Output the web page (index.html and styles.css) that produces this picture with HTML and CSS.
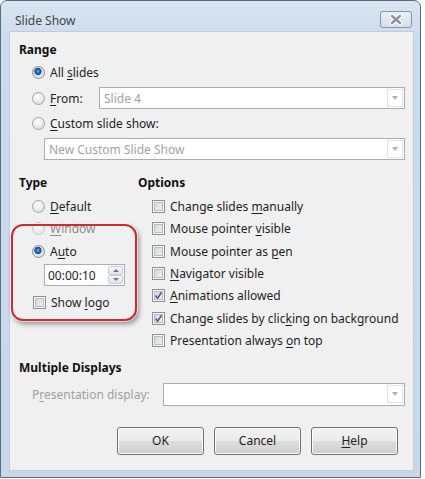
FILE: index.html
```html
<!DOCTYPE html>
<html lang="en">
<head>
    <meta charset="UTF-8">
    <title>Slide Show</title>
    <link rel="stylesheet" href="styles.css">
</head>
<body>
    <div class="window">
        <div class="titlebar">
            <span class="title">Slide Show</span>
            <span class="close">
                <svg width="14" height="11" viewBox="0 0 14 11">
                    <path d="M3 2 L11 9 M11 2 L3 9" stroke="#ffffff" stroke-width="4.6" stroke-linecap="round"/>
                    <path d="M3 2 L11 9 M11 2 L3 9" stroke="#8b939e" stroke-width="2.4" stroke-linecap="round"/>
                </svg>
            </span>
        </div>
        <div class="client">
            <h2>Range</h2>
            <div class="range">
                <div class="row first"><span class="radio on"></span><span class="lbl">All <u>s</u>lides</span></div>
                <div class="row"><span class="radio"></span><span class="lbl from"><u>F</u>rom:</span>
                    <div class="combo">Slide 4<span class="arrow"><i></i></span></div>
                </div>
                <div class="row"><span class="radio"></span><span class="lbl"><u>C</u>ustom slide show:</span></div>
                <div class="combo custom">New Custom Slide Show<span class="arrow"><i></i></span></div>
            </div>

            <div class="columns">
                <div class="type">
                    <h2>Type</h2>
                    <div class="list">
                        <div class="row"><span class="radio"></span><span class="lbl"><u>D</u>efault</span></div>
                        <div class="row"><span class="radio faded"></span><span class="lbl faded"><u>W</u>indow</span></div>
                        <div class="row"><span class="radio on"></span><span class="lbl">A<u>u</u>to</span></div>
                        <div class="spin">
                            <span class="value">00:00:10</span>
                            <span class="spinner"><b class="up"></b><b class="down"></b></span>
                        </div>
                        <div class="row logo"><span class="check"></span><span class="lbl">Show <u>l</u>ogo</span></div>
                    </div>
                    <div class="highlight"></div>
                </div>
                <div class="options">
                    <h2>Options</h2>
                    <div class="list">
                        <div class="row"><span class="check"></span><span class="lbl">Change slides <u>m</u>anually</span></div>
                        <div class="row"><span class="check"></span><span class="lbl">Mouse pointer <u>v</u>isible</span></div>
                        <div class="row"><span class="check"></span><span class="lbl">Mouse pointer as <u>p</u>en</span></div>
                        <div class="row"><span class="check"></span><span class="lbl"><u>N</u>avigator visible</span></div>
                        <div class="row"><span class="check on"><svg width="11" height="11" viewBox="0 0 11 11"><path d="M2.5 5.5 L4.6 8.2 L8.6 2.2" fill="none" stroke="#4a5e94" stroke-width="1.6"/></svg></span><span class="lbl"><u>A</u>nimations allowed</span></div>
                        <div class="row"><span class="check on"><svg width="11" height="11" viewBox="0 0 11 11"><path d="M2.5 5.5 L4.6 8.2 L8.6 2.2" fill="none" stroke="#4a5e94" stroke-width="1.6"/></svg></span><span class="lbl">Change slides by clic<u>k</u>ing on background</span></div>
                        <div class="row"><span class="check"></span><span class="lbl">Presentation always <u>o</u>n top</span></div>
                    </div>
                </div>
            </div>

            <h2 class="displays-head">Multiple Displays</h2>
            <div class="display-row">
                <span class="lbl disabled">P<u>r</u>esentation display:</span>
                <div class="combo"><span class="arrow"><i></i></span></div>
            </div>

            <div class="buttons">
                <button>OK</button>
                <button>Cancel</button>
                <button><u>H</u>elp</button>
            </div>
        </div>
    </div>
</body>
</html>
```

FILE: styles.css
```css
body {
    margin: 0;
    background: #ffffff;
    font-family: "Noto Sans", "Open Sans", sans-serif;
    font-size: 12px;
    color: #1e1e1e;
}
.window {
    width: 421px;
    height: 478px;
    box-sizing: border-box;
    border: 1px solid #5c6b7d;
    border-radius: 7px 7px 0 0;
    background: linear-gradient(#dae5f2, #cbdaec 40px, #c8d8ea);
    padding: 0 7px 7px 9px;
}
.titlebar {
    height: 31px;
    display: flex;
    align-items: flex-start;
    padding-left: 5px;
}
.title {
    color: #454545;
    font-size: 12px;
    flex: 1;
    margin-top: 11px;
}
.close {
    width: 32px;
    height: 17px;
    box-sizing: border-box;
    border: 1px solid #8795a6;
    border-radius: 3px;
    background: linear-gradient(#e9eff6, #d5dfea);
    display: flex;
    align-items: center;
    justify-content: center;
    margin-right: 1px;
    margin-top: 10px;
}
.client {
    height: 438px;
    box-sizing: border-box;
    background: #f0f0f0;
    box-shadow: 0 0 0 1px #bfcde0;
    padding: 10px 8px 0 9px;
}
h2 {
    margin: 0;
    height: 16px;
    line-height: 16px;
    font-size: 12px;
    font-weight: bold;
    color: #111;
}
.row {
    display: flex;
    align-items: center;
    height: 22px;
}
.lbl {
    white-space: nowrap;
}
u {
    text-decoration-thickness: 1px;
    text-underline-offset: 2px;
}
.range {
    padding-left: 13px;
}
.range .row {
    margin-top: 3px;
}
.range .row.first {
    margin-top: 2px;
    height: 24px;
}
.range .lbl {
    margin-left: 5px;
}
.range .from {
    width: 49px;
}
.range .combo {
    flex: 1;
}
.combo {
    height: 22px;
    box-sizing: border-box;
    border: 1px solid #acacac;
    background: #ffffff;
    display: flex;
    align-items: center;
    padding-left: 4px;
    color: #a3a3a3;
}
.combo.custom {
    margin: 4px 0 0 12px;
}
.arrow {
    margin-left: auto;
    width: 16px;
    height: 18px;
    box-sizing: border-box;
    border: 1px solid #e3e3e3;
    margin-right: 1px;
    display: flex;
    align-items: center;
    justify-content: center;
}
.arrow i {
    width: 0;
    height: 0;
    border-left: 3.5px solid transparent;
    border-right: 3.5px solid transparent;
    border-top: 4px solid #b3b3b3;
}
.radio {
    width: 13px;
    height: 13px;
    box-sizing: border-box;
    border-radius: 50%;
    border: 1px solid #a2a4a6;
    background: radial-gradient(circle at 40% 35%, #ffffff, #e2e2e2 70%, #d6d6d6);
    flex: none;
}
.radio.on {
    border-color: #8a8c8e;
    background: radial-gradient(circle at 45% 40%, #8cc4f0 0, #2a6fb8 1.6px, #184d8f 3.3px, #d8dde4 3.9px, #f4f4f4 100%);
}
.radio.faded {
    opacity: 0.55;
}
.check {
    width: 13px;
    height: 13px;
    box-sizing: border-box;
    border: 1px solid #8e8f8f;
    background: linear-gradient(135deg, #cfd3d8, #f4f4f4);
    box-shadow: inset 0 0 0 1px #f7f7f7, inset 0 0 0 2px #b9bdc3;
    flex: none;
    display: flex;
    align-items: center;
    justify-content: center;
}
.check svg {
    display: block;
}
.columns {
    margin-top: 15px;
    display: grid;
    grid-template-columns: 119px 1fr;
}
.type {
    position: relative;
}
.list {
    margin-top: 4.5px;
}
.list .row {
    height: 22.3px;
}
.type .list {
    padding-left: 13px;
}
.type .lbl {
    margin-left: 5px;
}
.lbl.faded {
    color: #8d8d8d;
}
.spin {
    margin: 2px 0 0 12px;
    width: 81px;
    height: 22px;
    box-sizing: border-box;
    border: 1px solid #abadb3;
    background: #ffffff;
    display: flex;
    align-items: center;
}
.spin .value {
    padding-left: 3px;
    flex: 1;
}
.spinner {
    width: 15px;
    height: 18px;
    margin-right: 1px;
    display: flex;
    flex-direction: column;
}
.spinner b {
    flex: 1;
    box-sizing: border-box;
    border: 1px solid #c6cedb;
    border-radius: 2px;
    background: linear-gradient(#f5f7fa, #dfe5ee);
    display: flex;
    align-items: center;
    justify-content: center;
}
.spinner b::after {
    content: "";
    border-left: 3px solid transparent;
    border-right: 3px solid transparent;
}
.spinner .up::after {
    border-bottom: 3px solid #6b7795;
}
.spinner .down::after {
    border-top: 3px solid #6b7795;
}
.row.logo {
    margin-top: 5px;
    height: 22px;
    padding-left: 1px;
}
.highlight {
    position: absolute;
    left: -8px;
    top: 49px;
    width: 126px;
    height: 97px;
    box-sizing: border-box;
    border: 2px solid #cf2a30;
    border-radius: 12px;
    box-shadow: 0 0 0 1px rgba(255, 255, 255, 0.6), 2px 3px 5px rgba(0, 0, 0, 0.4);
}
.options .list {
    padding-left: 14px;
}
.options .lbl {
    margin-left: 5px;
}
.displays-head {
    margin-top: 8px;
}
.display-row {
    margin-top: 7px;
    height: 23px;
    display: flex;
    align-items: center;
    padding-left: 13px;
}
.display-row .lbl {
    width: 131px;
}
.display-row .combo {
    flex: 1;
    height: 23px;
}
.disabled {
    color: #a0a0a0;
}
.buttons {
    margin-top: 21px;
    display: flex;
    justify-content: flex-end;
    gap: 10px;
    padding-right: 7px;
}
button {
    width: 87px;
    height: 28px;
    border: 1px solid #707070;
    border-radius: 3px;
    background: linear-gradient(#f2f2f2 0%, #ebebeb 50%, #dddddd 51%, #cfcfcf 100%);
    box-shadow: inset 0 0 0 1px #fbfbfb;
    font-family: inherit;
    font-size: 12px;
    color: #1e1e1e;
    padding: 0;
}
```
